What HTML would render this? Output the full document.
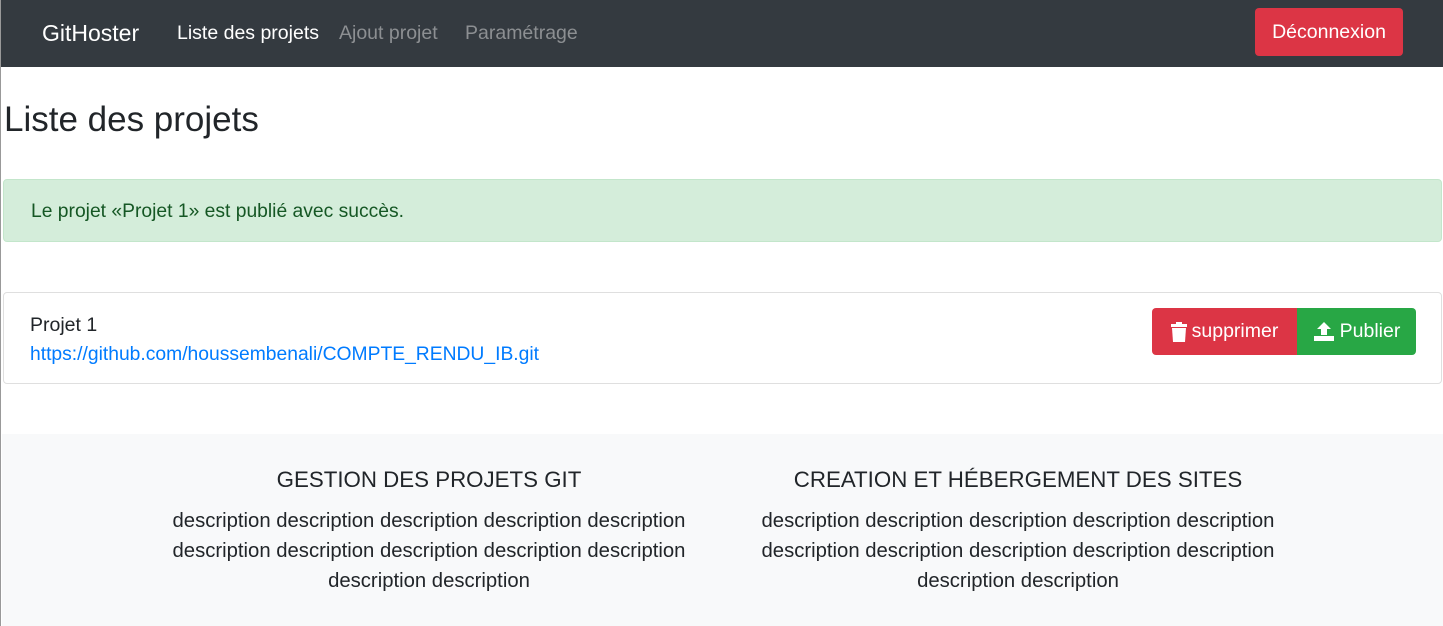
<!DOCTYPE html>
<html><head><meta charset="utf-8"><style>
*{box-sizing:border-box;margin:0;padding:0}
body{width:1443px;height:626px;overflow:hidden;background:#fff;font-family:"Liberation Sans",sans-serif;color:#212529;position:relative;border-left:1px solid #999}
.nav{position:absolute;left:0;top:0;width:1443px;height:67px;background:#343a40}
.nav span{position:absolute;top:22px;font-size:19.5px;white-space:nowrap}
.btn{position:absolute;color:#fff;font-size:19.5px;display:flex;align-items:center;justify-content:center;border-radius:4px}
h1{position:absolute;left:3px;top:100px;font-size:35px;font-weight:500;white-space:nowrap}
.alert{position:absolute;left:2px;top:179px;width:1439px;height:63px;background:#d4edda;border:1px solid #c3e6cb;border-radius:4px;color:#155724;font-size:19.3px;padding:21px 27px;white-space:nowrap}
.card{position:absolute;left:2px;top:292px;width:1439px;height:92px;border:1px solid #dfdfdf;border-radius:4px}
.foot{position:absolute;left:1px;top:434px;width:1442px;height:192px;background:#f8f9fa}
.col{position:absolute;top:33px;width:560px;text-align:center;white-space:nowrap}
.col h3{font-size:22.3px;font-weight:500;margin-bottom:13px}
.col p{font-size:20.3px;line-height:30px}
</style></head><body>
<div class="nav">
<span style="left:41px;color:#fff;font-size:23px;top:20px">GitHoster</span>
<span style="left:176px;color:#fff">Liste des projets</span>
<span style="left:338px;color:#8c8f92">Ajout projet</span>
<span style="left:464px;color:#8c8f92">Paramétrage</span>
<div class="btn" style="left:1254px;top:8px;width:148px;height:48px;background:#dc3545">Déconnexion</div>
</div>
<h1>Liste des projets</h1>
<div class="alert">Le projet «Projet 1» est publié avec succès.</div>
<div class="card">
<div style="position:absolute;left:26px;top:21px;font-size:19.5px">Projet 1</div>
<div style="position:absolute;left:26px;top:51px;font-size:19.3px;color:#007bff;white-space:nowrap">https://github.com/houssembenali/COMPTE_RENDU_IB.git</div>
</div>
<div class="btn" style="left:1151px;top:308px;width:145px;height:47px;background:#dc3545;border-radius:4px 0 0 4px">
<svg width="16" height="20" viewBox="0 0 16 20" style="margin-right:5px"><rect x="0" y="2" width="16" height="3" fill="#fff"/><rect x="5" y="0" width="6" height="3" fill="#fff"/><path d="M1 6h14l-1 14H2z" fill="#fff"/></svg>supprimer</div>
<div class="btn" style="left:1296px;top:308px;width:119px;height:47px;background:#28a745;border-radius:0 4px 4px 0">
<svg width="22" height="20" viewBox="0 0 22 20" style="margin-right:5px"><path d="M11 0l7 7h-4v6h-6V7H4z" fill="#fff"/><rect x="1" y="14" width="20" height="5" fill="#fff"/></svg>Publier</div>
<div class="foot">
<div class="col" style="left:147px"><h3>GESTION DES PROJETS GIT</h3><p>description description description description description<br>description description description description description<br>description description</p></div>
<div class="col" style="left:736px"><h3>CREATION ET HÉBERGEMENT DES SITES</h3><p>description description description description description<br>description description description description description<br>description description</p></div>
</div>
</body></html>
